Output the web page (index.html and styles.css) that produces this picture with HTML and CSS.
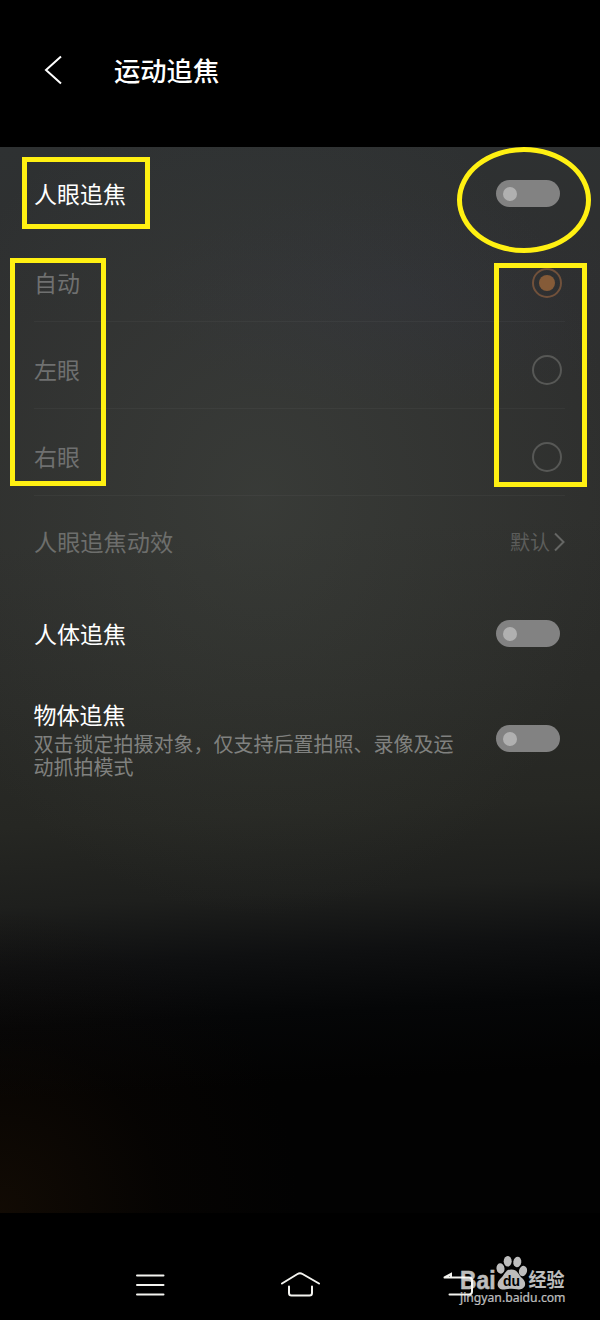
FILE: index.html
```html
<!DOCTYPE html>
<html lang="zh-CN">
<head>
<meta charset="utf-8">
<title>运动追焦</title>
<link rel="stylesheet" href="styles.css">
</head>
<body>
<div class="screen">
  <header class="header">
    <svg class="back" width="20" height="30" viewBox="0 0 20 30"><path d="M18 1.500 3 15 18 28.500"/></svg>
    <h1 class="header-title">运动追焦</h1>
  </header>

  <main class="panel">
    <div class="row row-main"><span class="label">人眼追焦</span><span class="toggle"></span></div>
    <div class="row option option-first"><span class="label">自动</span><span class="radio radio-on"></span></div>
    <div class="row option"><span class="label">左眼</span><span class="radio"></span></div>
    <div class="row option"><span class="label">右眼</span><span class="radio"></span></div>
    <div class="row row-effect">
      <span class="label">人眼追焦动效</span>
      <span class="value">默认<svg width="13" height="20" viewBox="0 0 13 20"><path d="M2 1.500 10.500 10 2 18.500"/></svg></span>
    </div>
    <div class="row row-body"><span class="label">人体追焦</span><span class="toggle"></span></div>
    <div class="row row-object">
      <div class="text">
        <div class="label">物体追焦</div>
        <p class="desc">双击锁定拍摄对象，仅支持后置拍照、录像及运动抓拍模式</p>
      </div>
      <span class="toggle"></span>
    </div>
  </main>

  <nav class="nav">
    <svg width="30" height="30" viewBox="0 0 30 30"><path d="M2 5.500H28.500M2 15H28.500M2 24.500H28.500"/></svg>
    <svg width="40" height="30" viewBox="0 0 40 30"><path d="M2 13.500 17.500 4Q20 2.500 22.500 4L39 13.500M9 16.500V23Q9 25.500 11.500 25.500H29.500Q32 25.500 32 23V16.500"/></svg>
    <svg width="30" height="30" viewBox="0 0 30 30"><path d="M2 7.500H26Q29 7.500 29 10.500V21.500Q29 24.500 26 24.500H6.500M1.500 7.500 8 4V7"/></svg>
  </nav>

  <div class="mark mark-title"></div>
  <div class="mark mark-options"></div>
  <div class="mark mark-toggle"></div>
  <div class="mark mark-radios"></div>

  <div class="watermark">
    <svg width="116" height="56" viewBox="0 0 116 56">
      <text class="wm-latin" x="3" y="33.500" textLength="35.500" lengthAdjust="spacingAndGlyphs">Bai</text>
      <ellipse cx="43.500" cy="13.500" rx="4" ry="5.200" transform="rotate(-8 43.500 13.500)"/>
      <ellipse cx="50.700" cy="6.300" rx="4" ry="5.300"/>
      <ellipse cx="60.300" cy="7" rx="4" ry="5.300" transform="rotate(8 60.300 7)"/>
      <ellipse cx="66" cy="16" rx="4" ry="5.200" transform="rotate(14 66 16)"/>
      <path d="M54.500 14.500C61 14.500 61 19.500 65 23C71.500 29 67 36 60 34.200C56.500 33.500 52.500 33.500 49 34.200C41 36 37.500 29 44 23C48 19.500 48 14.500 54.500 14.500Z"/>
      <text class="wm-du" x="46" y="31" textLength="17" lengthAdjust="spacingAndGlyphs">du</text>
      <text class="wm-cjk" x="71.500" y="32" textLength="36" lengthAdjust="spacingAndGlyphs">经验</text>
      <text class="wm-url" x="3" y="47" textLength="105.500" lengthAdjust="spacingAndGlyphs">jingyan.baidu.com</text>
    </svg>
  </div>
</div>
</body>
</html>
```
FILE: styles.css
```css
* { box-sizing: border-box; }
body {
  margin: 0;
  background: #000;
  font-family: "Noto Sans CJK SC", sans-serif;
}
.screen {
  position: relative;
  width: 600px;
  height: 1320px;
  overflow: hidden;
  display: flex;
  flex-direction: column;
  color: #fff;
}
.header {
  height: 147px;
  padding: 55px 0 0 43px;
  display: flex;
  align-items: flex-start;
}
.header-title {
  margin: -1px 0 0 51px;
  font-size: 26.3px;
  font-weight: 500;
  line-height: 32px;
}
svg { display: block; }
.back path { fill: none; stroke: #fff; stroke-width: 2; }

.panel {
  height: 1066px;
  background:
    radial-gradient(ellipse 300px 320px at 0 100%, rgba(48, 28, 8, .34), rgba(30, 15, 4, .12) 55%, transparent),
    radial-gradient(ellipse 360px 420px at 260px 350px, rgba(84, 90, 82, .27), transparent),
    radial-gradient(ellipse 260px 110px at 400px 150px, rgba(48, 50, 62, .35), transparent),
    linear-gradient(177deg, #2e3132 0, #2e2f2f 180px, #2e2f2d 400px, #2a2b28 560px, #262723 680px, #1e1f1d 760px, #0f1011 820px, #050607 880px, #020202 950px, #020202 100%);
}
.row {
  display: flex;
  align-items: center;
  justify-content: space-between;
  padding: 0 40px 0 34px;
}
.label { font-size: 23px; line-height: 26px; }
.row-main { height: 93px; }
.row > .label { margin-top: -2px; }
.option {
  height: 87px;
  margin-right: 35px;
  margin-left: 34px;
  padding: 9px 3px 0 0;
  border-bottom: 1px solid rgba(255, 255, 255, .035);
  color: #6f7070;
}
.option-first { height: 82px; padding-top: 5px; }
.row-effect { height: 93px; padding-right: 34px; color: #6d6e6c; }
.row-effect .label { margin-top: -3px; font-size: 23.2px; }
.row-body { height: 89px; }
.row-object { height: 120px; align-items: flex-start; padding-top: 23px; }
.row-object .toggle { margin-top: 24px; }
.text { width: 422px; margin-left: -.5px; }
.desc {
  margin: 5px 0 0;
  color: #80817f;
  font-size: 20px;
  line-height: 23px;
  word-break: break-all;
}
.value {
  display: flex;
  align-items: center;
  gap: 3px;
  margin-top: -2px;
  color: #5c5d5b;
  font-size: 20px;
}
.value path { fill: none; stroke: #656664; stroke-width: 2; }

.toggle {
  flex: none;
  width: 64px;
  height: 27px;
  padding: 7px;
  border-radius: 14px;
  background: #828282;
}
.toggle::before {
  content: "";
  display: block;
  width: 14px;
  height: 14px;
  border-radius: 50%;
  background: #b0b0b0;
}
.radio {
  width: 30px;
  height: 30px;
  padding: 5px;
  border: 2px solid #575856;
  border-radius: 50%;
}
.radio-on { border-color: #71513b; }
.radio-on::before {
  content: "";
  display: block;
  width: 16px;
  height: 16px;
  border-radius: 50%;
  background: #855b38;
}

.nav {
  height: 107px;
  padding: 57px 127px 0 135px;
  display: flex;
  justify-content: space-between;
}
.nav svg:nth-child(2) { margin: 0 8px 0 0; }
.nav path { fill: none; stroke: #f4f4f0; stroke-width: 2; stroke-linecap: round; }

/* Yellow callouts drawn over the settings */
.mark { position: absolute; border: 5px solid #fff012; }
.mark-title { left: 22px; top: 157px; width: 128px; height: 72px; }
.mark-options { left: 10px; top: 258px; width: 96px; height: 228px; }
.mark-toggle { left: 457px; top: 147px; width: 134px; height: 106px; border-radius: 50%; }
.mark-radios { left: 494px; top: 263px; width: 93px; height: 224px; }

.watermark { position: absolute; left: 457px; top: 1255px; fill: #fff; opacity: .74; }
.wm-latin { font: 700 25px "Liberation Sans", sans-serif; stroke: #fff; stroke-width: .5; }
.wm-du { font: 700 14.5px "Liberation Sans", sans-serif; fill: #000; }
.wm-cjk { font: 700 19px "Noto Sans CJK SC", sans-serif; }
.wm-url { font: 400 13px "Noto Sans", sans-serif; stroke: #fff; stroke-width: .2; }
```
